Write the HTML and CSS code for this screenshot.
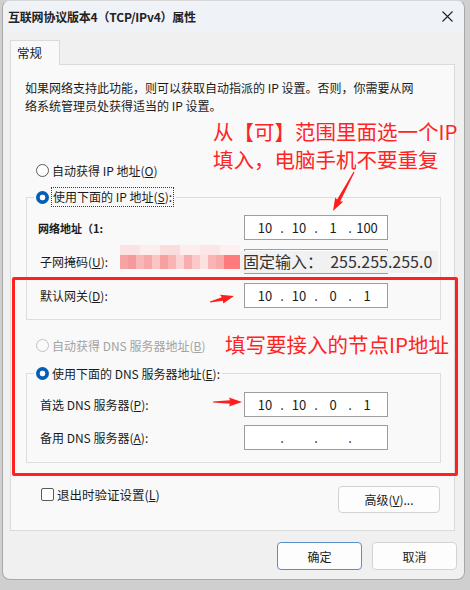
FILE: index.html
```html
<!DOCTYPE html>
<html lang="zh-CN">
<head>
<meta charset="utf-8">
<title>互联网协议版本4（TCP/IPv4）属性</title>
<link rel="stylesheet" href="styles.css">
</head>
<body>
<div class="window">
  <div class="titlebar">
    <span class="title">互联网协议版本4（TCP/IPv4）属性</span>
    <svg class="close" width="11" height="11" viewBox="0 0 11 11"><path d="M0.5 0.5L10.5 10.5M10.5 0.5L0.5 10.5"/></svg>
  </div>
  <div class="content">
    <div class="tabs"><div class="tab">常规</div></div>
    <div class="panel">
      <p class="desc">如果网络支持此功能，则可以获取自动指派的 IP 设置。否则，你需要从网<br>络系统管理员处获得适当的 IP 设置。</p>

      <div class="radio-row ip-auto"><span class="radio"></span><span>自动获得 IP 地址(<u>O</u>)</span></div>

      <fieldset class="group ip-group">
        <legend><span class="radio on"></span><span class="focus">使用下面的 IP 地址(<u>S</u>):</span></legend>
        <div class="row">
          <span class="label edited">网络地址（1:</span>
          <div class="ip"><span>10</span><i>.</i><span>10</span><i>.</i><span>1</span><i>.</i><span>100</span></div>
        </div>
        <div class="row">
          <span class="label">子网掩码(<u>U</u>):</span>
          <div class="ip"></div>
        </div>
        <div class="row">
          <span class="label">默认网关(<u>D</u>):</span>
          <div class="ip"><span>10</span><i>.</i><span>10</span><i>.</i><span>0</span><i>.</i><span>1</span></div>
        </div>
      </fieldset>

      <div class="radio-row dns-auto disabled"><span class="radio off"></span><span>自动获得 DNS 服务器地址(<u>B</u>)</span></div>

      <fieldset class="group dns-group">
        <legend><span class="radio on"></span><span class="plain">使用下面的 DNS 服务器地址(<u>E</u>):</span></legend>
        <div class="row">
          <span class="label">首选 DNS 服务器(<u>P</u>):</span>
          <div class="ip"><span>10</span><i>.</i><span>10</span><i>.</i><span>0</span><i>.</i><span>1</span></div>
        </div>
        <div class="row">
          <span class="label">备用 DNS 服务器(<u>A</u>):</span>
          <div class="ip"><span></span><i>.</i><span></span><i>.</i><span></span><i>.</i><span></span></div>
        </div>
      </fieldset>

      <div class="check-row">
        <label class="check"><span class="box"></span><span>退出时验证设置(<u>L</u>)</span></label>
        <button class="btn adv">高级(<u>V</u>)...</button>
      </div>
    </div>
    <div class="actions">
      <button class="btn primary">确定</button>
      <button class="btn">取消</button>
    </div>
  </div>
</div>

<div class="mosaic"><div class="haze"></div><div class="band"></div></div>
<div class="fixed-note">固定输入：&nbsp;&nbsp;255.255.255.0</div>
<div class="note note-top">从【可】范围里面选一个IP<br>填入，电脑手机不要重复</div>
<div class="note note-dns">填写要接入的节点IP地址</div>
<div class="redbox"></div>
<svg class="marks" width="470" height="590" viewBox="0 0 470 590">
  <polygon points="354.5,172.3 340.3,201.3 343.1,201.7 333,211 335.2,197.4 337.1,199.6 353.5,171.7"/>
  <polygon points="210.1,302.5 222.8,300.7 223.3,303.5 234,296 219.9,294.8 221.9,297.2 209.9,301.5"/>
  <polygon points="213,402.6 230,403.8 229,406.5 242,402 229,397.5 230,400.2 213,401.4"/>
</svg>
</body>
</html>
```
FILE: styles.css
```css
* { box-sizing: border-box; }
html, body { margin: 0; padding: 0; }
body {
  width: 470px;
  height: 590px;
  background: #cfcfcf;
  font-family: "Noto Sans CJK SC", "Noto Sans", sans-serif;
  font-size: 12px;
  color: #1b1b1b;
  position: relative;
  overflow: hidden;
}
u { text-decoration: underline; text-underline-offset: 1px; }

.window {
  margin-left: 2px;
  width: 463px;
  height: 580px;
  background: #f0f0f0;
  border: 1px solid #a8a8a8;
  border-top-color: #d6d6d6;
  border-radius: 8px;
  overflow: hidden;
  display: flex;
  flex-direction: column;
}
.titlebar {
  height: 30px;
  flex: none;
  background: #eff2f7;
  display: flex;
  align-items: center;
  justify-content: space-between;
  padding: 0 11px 0 5px;
}
.title { font-size: 12px; font-weight: 700; color: #222; letter-spacing: -0.2px; }
.close path { stroke: #222; stroke-width: 1.1; fill: none; }

.content {
  flex: 1;
  padding: 9px 7px 0 7px;
  display: flex;
  flex-direction: column;
}
.tabs { display: flex; }
.tab {
  width: 50px;
  height: 25px;
  background: #f9f9f9;
  border: 1px solid #dadada;
  border-bottom: none;
  margin-bottom: -1px;
  position: relative;
  z-index: 1;
  padding-left: 6px;
  line-height: 24px;
  font-size: 12.5px;
}
.panel {
  margin-right: 2px;
  background: #f9f9f9;
  border: 1px solid #dadada;
  padding: 14px 0 17px 0;
  display: flex;
  flex-direction: column;
}
.desc {
  margin: 0 0 0 14px;
  line-height: 18px;
  font-size: 12px;
}

.radio {
  width: 13px;
  height: 13px;
  border-radius: 50%;
  border: 1px solid #5c5c5c;
  background: #fff;
  flex: none;
}
.radio.on {
  border: none;
  background: radial-gradient(circle, #fff 0 2.6px, #005fb8 3.2px);
}
.radio.off { border-color: #c2c2c2; background: #fafafa; }

.radio-row {
  display: flex;
  align-items: center;
  gap: 3px;
  height: 24px;
  padding-left: 25px;
}
.ip-auto { margin-top: 43px; }
.dns-auto { margin-top: 13px; }
.disabled { color: #a3a3a3; }

.group {
  margin: 3px 13px 0 15px;
  border: 1px solid #dddddd;
  padding: 0 0 11px 7px;
  min-width: 0;
  display: flex;
  flex-direction: column;
  gap: 9px;
}
.group legend {
  padding: 0 2px;
  height: 24px;
  display: flex;
  align-items: center;
  gap: 2px;
}
.focus {
  border: 1px dotted #3a3a3a;
  padding: 1px 1px;
  line-height: 16px;
}
.plain { padding-left: 1px; }
.ip-group .row:first-of-type { margin-top: 6px; }
.dns-group { margin-top: 4px; gap: 8px; padding-bottom: 12px; }
.dns-group .row:first-of-type { margin-top: 7px; }

.row {
  display: flex;
  align-items: center;
  height: 25px;
}
.label {
  width: 210px;
  padding-left: 6px;
  flex: none;
}
.label.edited { font-size: 11px; font-weight: 700; padding-left: 4px; }

.ip {
  width: 144px;
  height: 25px;
  border: 1px solid #9d9d9d;
  background: #fff;
  display: flex;
  align-items: center;
  padding-left: 6px;
  font-size: 13px;
  color: #1b1b1b;
}
.ip span { width: 28px; text-align: center; }
.ip i { font-style: normal; width: 6px; text-align: center; }

.check-row {
  margin: 23px 14px 0 30px;
  display: flex;
  justify-content: space-between;
  align-items: flex-start;
}
.check {
  display: flex;
  align-items: center;
  gap: 3px;
  height: 16px;
  font-size: 12.5px;
}
.box {
  width: 13px;
  height: 13px;
  border: 1px solid #5a5a5a;
  border-radius: 2px;
  background: #fff;
}

.btn {
  font-family: inherit;
  font-size: 12px;
  color: #1b1b1b;
  background: #fdfdfd;
  border: 1px solid #d3d3d3;
  border-radius: 4px;
  padding: 0;
}
.adv { width: 102px; height: 27px; }
.actions {
  margin-top: 11px;
  display: flex;
  justify-content: flex-end;
  gap: 10px;
}
.actions .btn { width: 85px; height: 28px; }
.btn.primary { border-color: #5a8fc6; }

/* annotations drawn over the screenshot */
.mosaic {
  position: absolute;
  left: 120px;
  top: 245px;
  width: 120px;
  height: 28px;
}
.haze {
  height: 10px;
  background: linear-gradient(90deg,
    #fbe3e3 0 20px, #fdeeee 20px 40px, #fadede 40px 60px,
    #fdeded 60px 80px, #fbe5e5 80px 100px, #fdf0f0 100px 120px);
}
.band {
  height: 14px;
  background: linear-gradient(90deg,
    #f7a3a3 0 8px, #f59a9a 8px 16px, #f9b7b7 16px 24px, #f7a8a8 24px 32px,
    #fbc5c5 32px 40px, #f6a0a0 40px 48px, #f9b4b4 48px 56px, #fcd2d2 56px 64px,
    #f8aeae 64px 72px, #fbc9c9 72px 80px, #fde0e0 80px 88px, #f9b5b5 88px 96px,
    #f9a9a9 96px 104px, #ff7a7a 104px 120px);
}
.fixed-note {
  position: absolute;
  left: 240px;
  top: 251px;
  width: 198px;
  height: 22px;
  padding-left: 3px;
  background: #f1f1f1;
  font-size: 16px;
  line-height: 21px;
  color: #333;
  white-space: nowrap;
}
.note {
  position: absolute;
  color: #ff2424;
  font-size: 20.5px;
  line-height: 28px;
  white-space: nowrap;
}
.note-top { left: 213px; top: 117px; }
.note-dns { left: 225px; top: 330px; }
.redbox {
  position: absolute;
  left: 12px;
  top: 277px;
  width: 446px;
  height: 199px;
  border: 3px solid #ff2020;
  border-radius: 2px;
}
.marks {
  position: absolute;
  left: 0;
  top: 0;
}
.marks polygon { fill: #ff1e1e; }
```
